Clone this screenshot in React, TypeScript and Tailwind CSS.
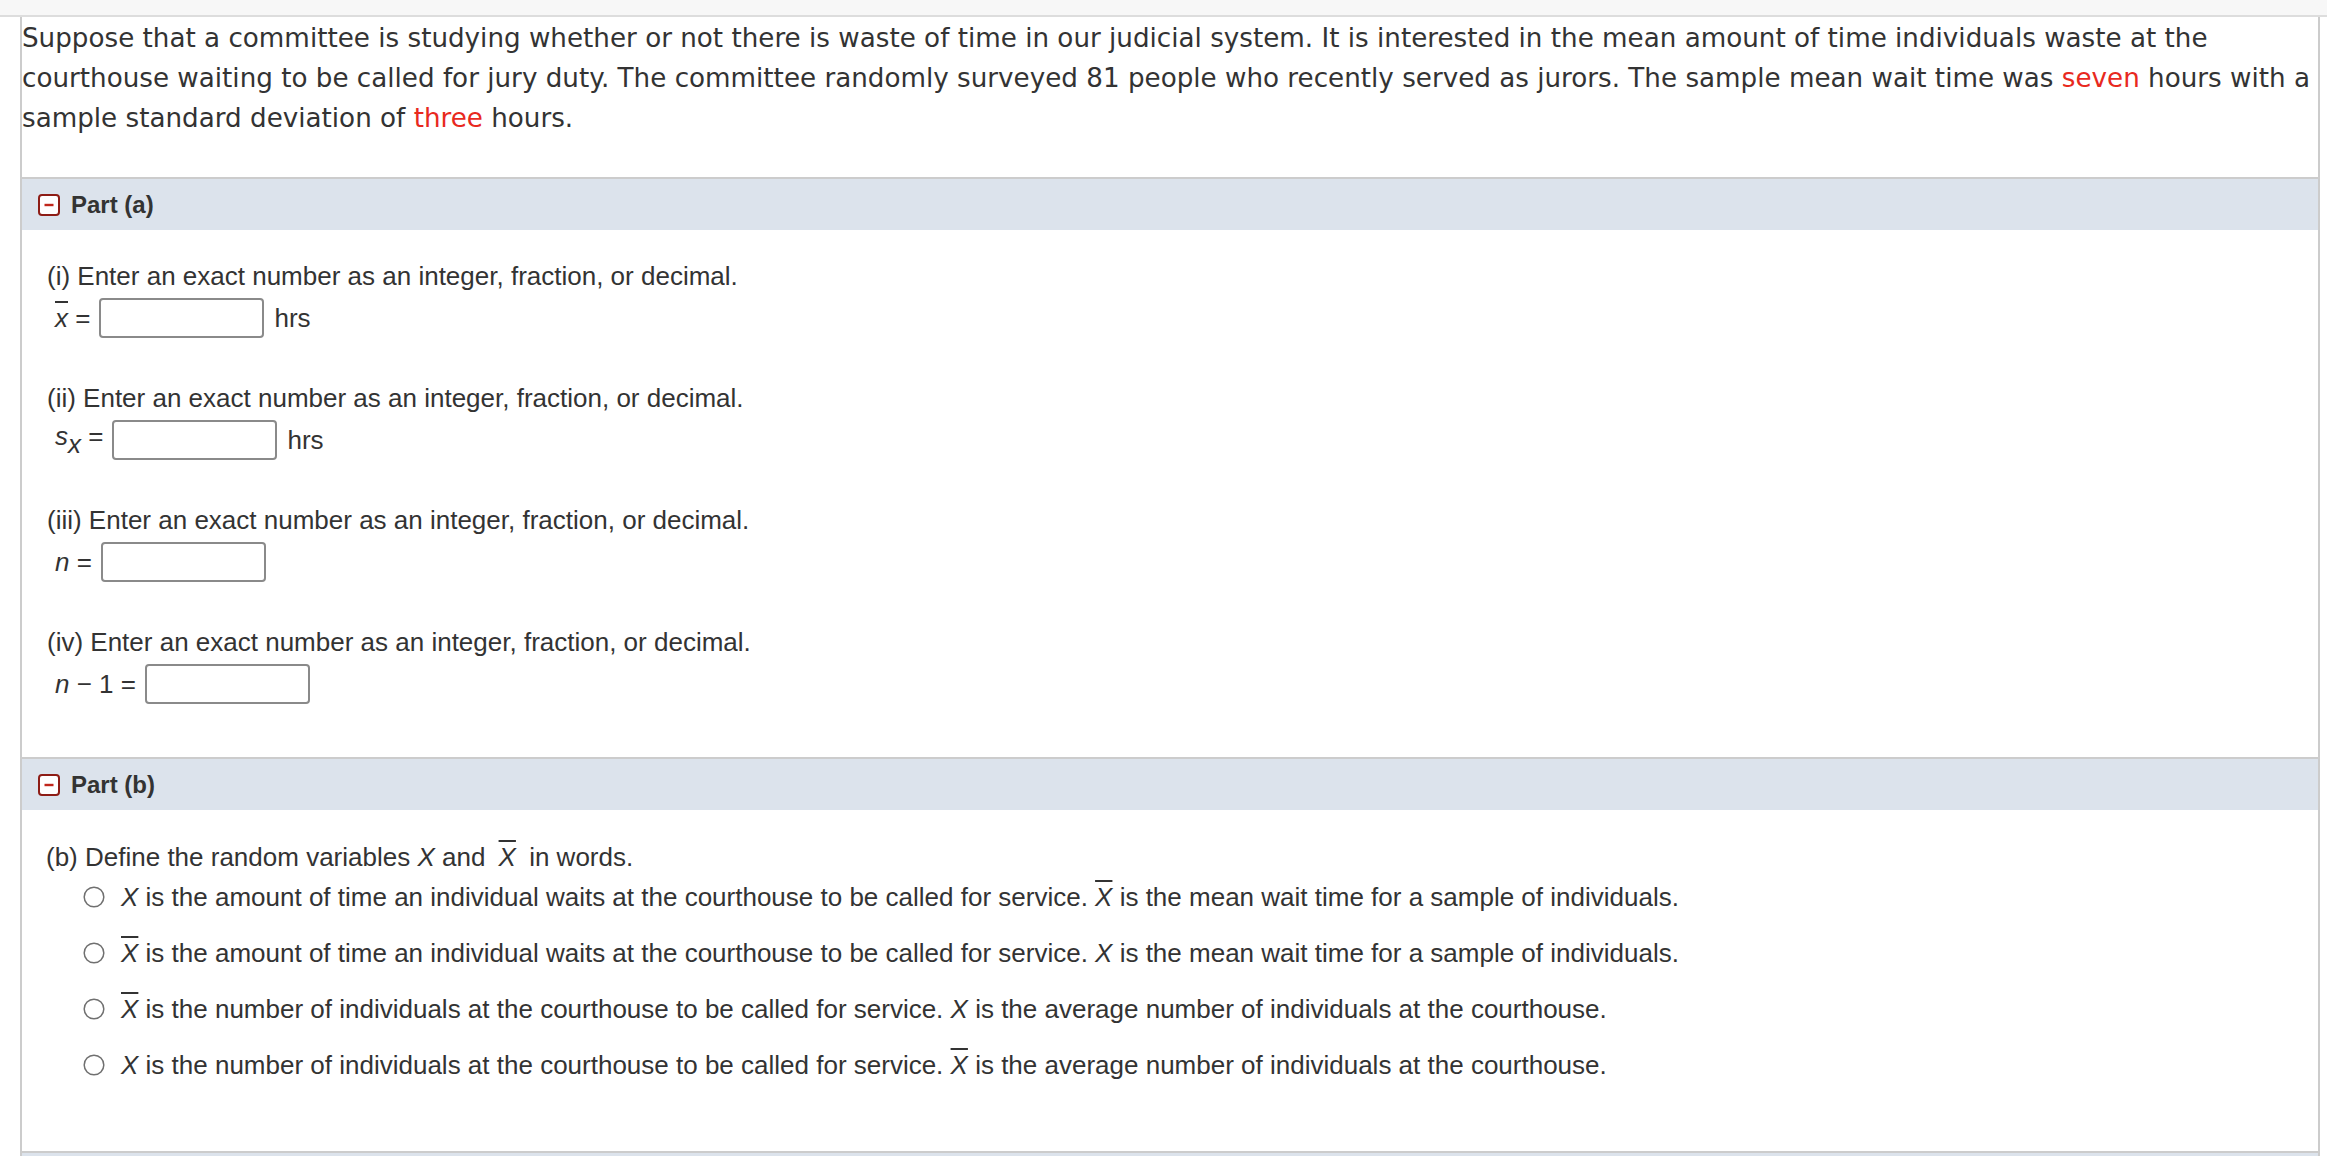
import React from "react"

const body = "font-['Liberation_Sans',Arial,sans-serif] text-[26px] text-[#333333]"

const MinusIcon = () => (
  <svg width="22" height="22" viewBox="0 0 22 22" className="shrink-0">
    <rect x="1" y="1" width="20" height="20" rx="3" fill="#ffffff" stroke="#8e1d16" strokeWidth="2" />
    <line x1="6.5" y1="11" x2="15.5" y2="11" stroke="#c0261b" strokeWidth="2.4" />
  </svg>
)

const Radio = () => (
  <svg width="22" height="22" viewBox="0 0 22 22" className="shrink-0">
    <circle cx="11" cy="11" r="9.8" fill="#ffffff" stroke="#707070" strokeWidth="1.5" />
  </svg>
)

const Bar = ({ children }: { children: React.ReactNode }) => (
  <span className="italic overline decoration-[2px]">{children}</span>
)

const PartHeader = ({ label }: { label?: string }) => (
  <div className="h-[53px] border-t-2 border-[#cccccc] bg-[#dce3ec] flex items-center pl-[16px] gap-[11px]">
    {label && (
      <>
        <MinusIcon />
        <span className="font-['Liberation_Sans',Arial,sans-serif] text-[24px] font-bold leading-none text-[#333333]">{label}</span>
      </>
    )}
  </div>
)

const Box = () => <div className="ml-[9px] w-[165px] h-[40px] rounded-[4px] border-2 border-[#8a8a8a] bg-white" />

type Item = { label: string; lhs: React.ReactNode; unit?: string }

const items: Item[] = [
  { label: "(i) Enter an exact number as an integer, fraction, or decimal.", lhs: <><Bar>x</Bar> =</>, unit: "hrs" },
  {
    label: "(ii) Enter an exact number as an integer, fraction, or decimal.",
    lhs: <><span className="italic">s</span><span className="italic align-[-8px]">x</span> =</>,
    unit: "hrs",
  },
  { label: "(iii) Enter an exact number as an integer, fraction, or decimal.", lhs: <><span className="italic">n</span> =</> },
  { label: "(iv) Enter an exact number as an integer, fraction, or decimal.", lhs: <><span className="italic">n</span> − 1 =</> },
]

const options: React.ReactNode[] = [
  <><span className="italic">X</span> is the amount of time an individual waits at the courthouse to be called for service. <Bar>X</Bar> is the mean wait time for a sample of individuals.</>,
  <><Bar>X</Bar> is the amount of time an individual waits at the courthouse to be called for service. <span className="italic">X</span> is the mean wait time for a sample of individuals.</>,
  <><Bar>X</Bar> is the number of individuals at the courthouse to be called for service. <span className="italic">X</span> is the average number of individuals at the courthouse.</>,
  <><span className="italic">X</span> is the number of individuals at the courthouse to be called for service. <Bar>X</Bar> is the average number of individuals at the courthouse.</>,
]

export default function App() {
  return (
    <div className="min-h-screen bg-white">
      <div className="h-[17px] bg-[#f7f7f7] border-b-2 border-[#dddddd]" />

      <div className="ml-[20px] mr-[7px] border-x-2 border-[#cccccc]">
        {/* question */}
        <div className="pt-px pb-[39px] font-['DejaVu_Sans',Verdana,sans-serif] text-[26.2px] leading-[40px] text-[#333333]">
          <div className="whitespace-nowrap">
            Suppose that a committee is studying whether or not there is waste of time in our judicial system. It is interested in the mean amount of time individuals waste at the
          </div>
          <div className="whitespace-nowrap">
            courthouse waiting to be called for jury duty. The committee randomly surveyed 81 people who recently served as jurors. The sample mean wait time was{" "}
            <span className="text-[#e8291e]">seven</span> hours with a
          </div>
          <div className="whitespace-nowrap">
            sample standard deviation of <span className="text-[#e8291e]">three</span> hours.
          </div>
        </div>

        <PartHeader label="Part (a)" />
        <div className={`${body} pl-[25px] pt-[26px] pb-[53px] flex flex-col gap-[40px]`}>
          {items.map((it, i) => (
            <div key={i}>
              <div className="leading-[40px] whitespace-nowrap">{it.label}</div>
              <div className="mt-[2px] h-[40px] pl-[8px] flex items-center leading-[40px]">
                <span className="whitespace-nowrap">{it.lhs}</span>
                <Box />
                {it.unit && <span className="ml-[10px]">{it.unit}</span>}
              </div>
            </div>
          ))}
        </div>

        <PartHeader label="Part (b)" />
        <div className={`${body} pl-[24px] pt-[27px] pb-[66px]`}>
          <div className="leading-[40px] whitespace-nowrap">
            (b) Define the random variables <span className="italic">X</span> and <span className="mx-[6px]"><Bar>X</Bar></span> in words.
          </div>
          <div className="pl-[37px] flex flex-col gap-[16px]">
            {options.map((o, i) => (
              <div key={i} className="flex items-center gap-[16px] h-[40px] leading-[40px]">
                <Radio />
                <span className="whitespace-nowrap">{o}</span>
              </div>
            ))}
          </div>
        </div>

        <PartHeader />
        <div className="h-[200px]" />
      </div>
    </div>
  )
}
